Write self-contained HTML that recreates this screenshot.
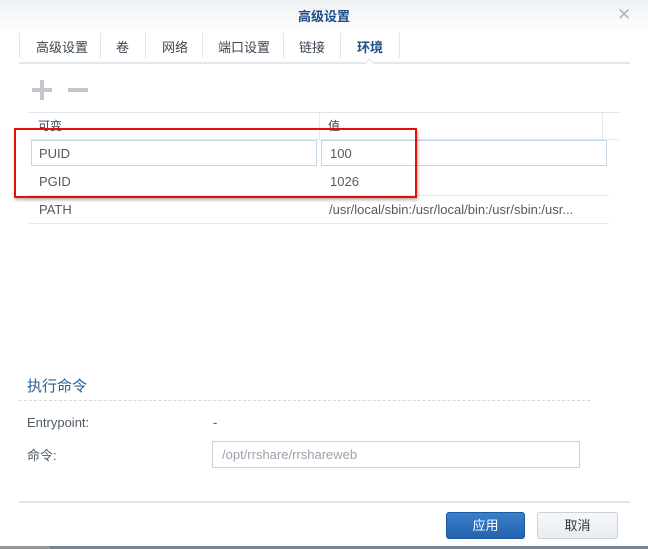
<!DOCTYPE html>
<html><head><meta charset="utf-8"><style>
*{margin:0;padding:0;box-sizing:border-box}
body{width:648px;height:549px;position:relative;background:#fff;font-family:"Liberation Sans","Noto Sans CJK SC",sans-serif;font-size:12px;color:#505a64;overflow:hidden}
.a{position:absolute;white-space:nowrap;line-height:16px}
.sep{position:absolute;top:33px;width:1px;height:25px;background:#e3e7ec}
.tab{position:absolute;top:37px;font-size:13px;color:#3c4650}
.hl{position:absolute;height:1px;background:#e6e9ec}
.btn{position:absolute;top:512px;height:27px;border-radius:3px;text-align:center;line-height:25px;font-size:13px}
</style></head><body>
<div class="a" style="left:0;top:0;width:648px;height:34px;background:linear-gradient(#eef1f4,#fff)"></div>
<div class="a" style="left:0;top:9px;width:648px;text-align:center;font-size:13px;font-weight:bold;color:#1e4b86">高级设置</div>
<div class="a" style="left:617px;top:7px;font-size:17px;color:#b4b8bc">✕</div>
<div class="sep" style="left:19px"></div><div class="sep" style="left:100px"></div><div class="sep" style="left:145px"></div><div class="sep" style="left:202px"></div><div class="sep" style="left:283px"></div><div class="sep" style="left:340px"></div><div class="sep" style="left:399px"></div>
<div class="tab" style="left:36px">高级设置</div>
<div class="tab" style="left:116px">卷</div>
<div class="tab" style="left:162px">网络</div>
<div class="tab" style="left:218px">端口设置</div>
<div class="tab" style="left:299px">链接</div>
<div class="tab" style="left:357px;font-weight:bold;color:#1e4b86">环境</div>
<div class="hl" style="left:19px;top:62px;width:611px;height:2px;background:#e3e6ea"></div>
<div class="a" style="left:366px;top:60px;width:7px;height:7px;background:#fff;border-left:1px solid #e0e3e6;border-top:1px solid #e0e3e6;transform:rotate(45deg)"></div>
<div class="a" style="left:32px;top:88px;width:20px;height:4px;background:#c3c6ca"></div>
<div class="a" style="left:40px;top:80px;width:4px;height:20px;background:#c3c6ca"></div>
<div class="a" style="left:68px;top:88px;width:20px;height:4px;background:#c3c6ca"></div>
<div class="hl" style="left:29px;top:112px;width:590px;background:#dde4ec"></div>
<div class="a" style="left:319px;top:113px;width:1px;height:26px;background:#e6e9ec"></div>
<div class="a" style="left:602px;top:113px;width:1px;height:26px;background:#e6e9ec"></div>
<div class="hl" style="left:29px;top:139px;width:590px"></div>
<div class="a" style="left:38px;top:118px;color:#3c4650">可变</div>
<div class="a" style="left:328px;top:118px;color:#3c4650">值</div>
<div class="a" style="left:31px;top:140px;width:286px;height:26px;border:1px solid #c6d5e4"></div>
<div class="a" style="left:321px;top:140px;width:286px;height:26px;border:1px solid #c6d5e4"></div>
<div class="a" style="left:39px;top:146px;font-size:13px">PUID</div>
<div class="a" style="left:330px;top:146px;font-size:13px">100</div>
<div class="a" style="left:39px;top:174px;font-size:13px">PGID</div>
<div class="a" style="left:330px;top:174px;font-size:13px">1026</div>
<div class="hl" style="left:29px;top:195px;width:580px"></div>
<div class="a" style="left:39px;top:202px;font-size:13px">PATH</div>
<div class="a" style="left:329px;top:202px;font-size:13px">/usr/local/sbin:/usr/local/bin:/usr/sbin:/usr...</div>
<div class="hl" style="left:29px;top:223px;width:580px"></div>
<div class="a" style="left:14px;top:128px;width:403px;height:70px;border:2px solid #e60d0d;box-shadow:1px 2px 3px rgba(0,0,0,.3)"></div>
<div class="a" style="left:27px;top:378px;font-size:15px;line-height:18px;color:#2a5f99">执行命令</div>
<div class="a" style="left:19px;top:400px;width:571px;border-top:1px dashed #cfdbe6"></div>
<div class="a" style="left:27px;top:415px;font-size:13px">Entrypoint:</div>
<div class="a" style="left:213px;top:415px;font-size:13px">-</div>
<div class="a" style="left:27px;top:448px;font-size:13px">命令:</div>
<div class="a" style="left:212px;top:441px;width:368px;height:27px;border:1px solid #c8d0d8;padding:5px 9px;font-size:13px;color:#9aa2aa">/opt/rrshare/rrshareweb</div>
<div class="hl" style="left:19px;top:501px;width:611px;height:2px;background:#e3e6ea"></div>
<div class="btn" style="left:446px;width:79px;background:linear-gradient(#3a80cc,#2462ac);border:1px solid #1f5aa0;color:#fff">应用</div>
<div class="btn" style="left:537px;width:81px;background:linear-gradient(#f6f8fa,#e8edf2);border:1px solid #c8d0d8;color:#333">取消</div>
<div class="a" style="left:0;top:546px;width:648px;height:3px;background:#7d8590"></div>
<div class="a" style="left:0;top:546px;width:50px;height:3px;background:#999"></div>
</body></html>
